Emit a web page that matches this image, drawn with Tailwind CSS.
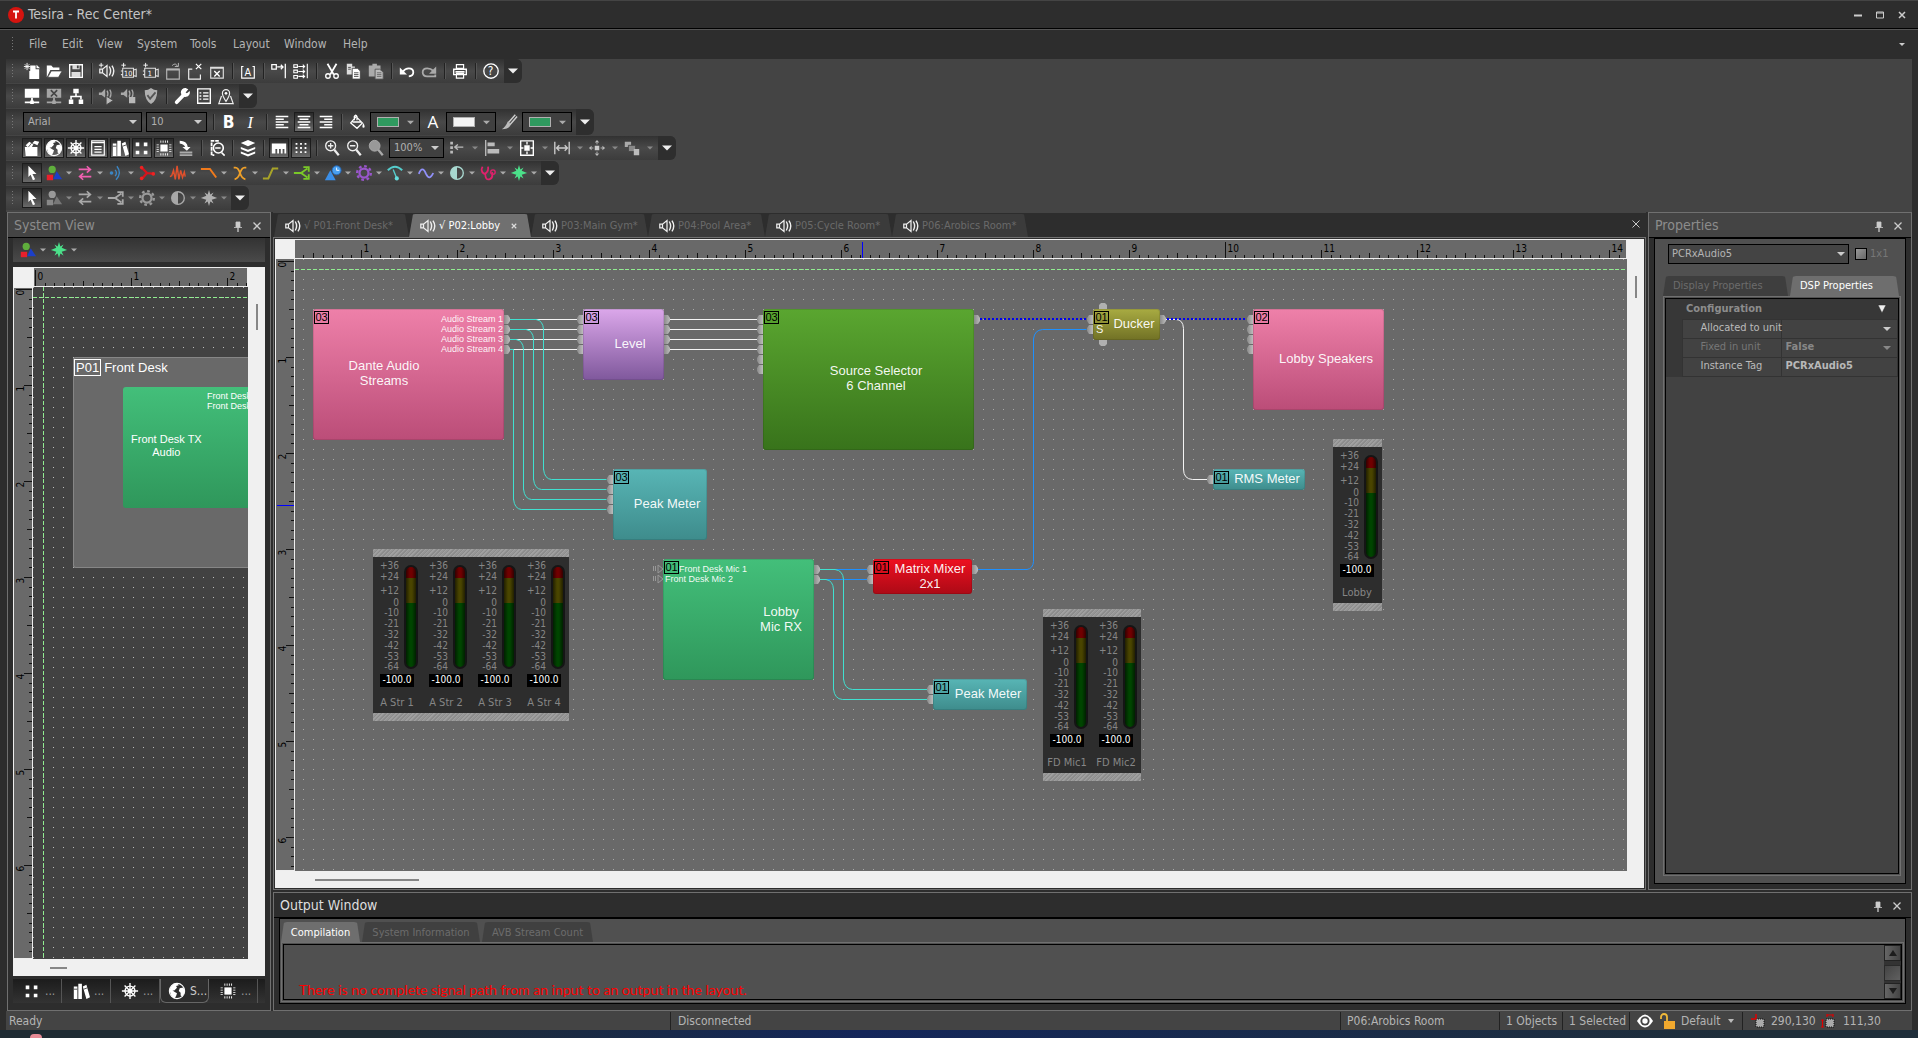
<!DOCTYPE html>
<html lang="en">
<head>
  <meta charset="UTF-8" />
  <meta name="viewport" content="width=device-width, initial-scale=1.0"/>
  <title>Tesira - Rec Center*</title>
  <script src="https://cdn.jsdelivr.net/npm/@tailwindcss/browser@4"></script>
</head>
<body class="h-screen flex flex-col overflow-hidden bg-[#2d2d2d] font-['DejaVu_Sans_Condensed','DejaVu_Sans',sans-serif] text-[12px] text-[#b4b4b4]">

  <!-- Title bar -->
  <header class="h-[29px] shrink-0 flex items-center pl-2 pr-2 border-t border-t-[#444] border-b border-b-black">
    <svg class="w-4 h-4 mr-1" viewBox="0 0 16 16"><circle cx="8" cy="8" r="8" fill="#d5140f"/><path d="M5 4.5h6M8 4.5v7" stroke="#fff" stroke-width="1.8" fill="none"/></svg>
    <h1 class="text-[14px] text-[#c4c4c4]">Tesira - Rec Center*</h1>
    <div class="ml-auto flex gap-[6px]">
      <button aria-label="Minimize" class="w-4 h-4"><svg viewBox="0 0 16 16"><path d="M4 8.500h8" stroke="#ccc" stroke-width="2"/></svg></button>
      <button aria-label="Maximize" class="w-4 h-4"><svg viewBox="0 0 16 16"><path d="M4.500 5h7v6h-7zM4.500 6h7" stroke="#ccc" fill="none"/></svg></button>
      <button aria-label="Close" class="w-4 h-4"><svg viewBox="0 0 16 16"><path d="M5 5l6 6M11 5l-6 6" stroke="#ccc" stroke-width="1.500"/></svg></button>
    </div>
  </header>

  <!-- Menu -->
  <nav class="h-[30px] shrink-0 flex items-center border-t border-[#555] pl-[11px] pr-2 pb-[2px]">
    <span class="w-[3px] h-4 mr-[8px] bg-[radial-gradient(#777_1px,transparent_1px)] bg-size-[3px_3px]"></span>
    <div id="menu" class="flex"></div>
    <svg class="ml-auto w-4 h-4" viewBox="0 0 16 16"><path d="M5 7h6l-3 3z" fill="#ccc"/></svg>
  </nav>

  <!-- Toolbars -->
  <div class="shrink-0 ml-[6px] mr-[6px] h-[153px] bg-[#444] flex flex-col items-start" id="toolbars"></div>

  <!-- Panels -->
  <main class="flex-1 min-h-0 flex gap-[2px] pl-[7px] pr-[6px]">

    <aside class="w-[264px] shrink-0 flex flex-col border border-[#707070] px-[5px] pb-[7px]">
      <div class="h-[25px] shrink-0 -mx-[5px] pl-[6px] pr-[5px] pt-px flex items-center bg-[#444] border-b border-black">
        <h2 class="text-[14px] text-[#8c8c8c]">System View</h2>
        <div class="ml-auto flex gap-[3px]" data-panel-buttons></div>
      </div>
      <div id="systemTools" class="h-6 shrink-0 flex items-center pl-1 bg-linear-to-b from-[#333] to-[#4a4a4a]"></div>
      <div class="mt-[5px] flex-1 min-h-0 grid grid-cols-[20px_1fr_17px] grid-rows-[20px_1fr_17px] bg-[#f0f0f0]">
        <span></span>
        <div class="relative overflow-hidden bg-[#696969] border border-[#eee]" data-ruler="h" data-start="1"></div>
        <span></span>
        <div class="relative overflow-hidden bg-[#696969] border border-[#eee]" data-ruler="v" data-start="1"></div>
        <div class="relative overflow-hidden bg-[#424242] bg-[radial-gradient(circle_at_0_0,#bdbdbd_1px,transparent_1px)] bg-size-[10px_10px]" id="systemCanvas"></div>
        <span class="relative"><i class="absolute left-2 top-[17px] w-[2px] h-[26px] bg-[#868686]"></i></span>
        <span></span>
        <span class="relative"><i class="absolute left-[17px] top-2 w-[17px] h-[2px] bg-[#868686]"></i></span>
        <span></span>
      </div>
      <div id="dockTabs" class="mt-[3px] h-6 shrink-0 flex bg-linear-to-b from-[#1c1c1c] to-[#333]"></div>
    </aside>

    <div class="flex-1 min-w-0 flex flex-col gap-[2px]">
      <div class="flex-1 min-h-0 flex gap-[2px]">

        <!-- Partition layout -->
        <section class="flex-1 min-w-0 flex flex-col">
          <div class="h-[25px] shrink-0 flex items-end pl-px border-t border-[#444]">
            <div id="docTabs" class="flex"></div>
            <button aria-label="Close tab" class="ml-auto mr-[2px] mb-[5px] w-4 h-4"><svg viewBox="0 0 16 16"><path d="M4.500 4.500l7 7M11.500 4.500l-7 7" stroke="#c8c8c8"/></svg></button>
          </div>
          <div class="flex-1 min-h-0 border border-[#707070] pt-px pl-px pb-px grid grid-cols-[20px_1fr_18px] grid-rows-[20px_1fr_17px]">
            <span class="bg-[#f0f0f0]"></span>
            <div class="relative overflow-hidden bg-[#696969] border border-l-0 border-[#eee]" data-ruler="h" data-start="-30" data-mark="567"></div>
            <span class="bg-[#f0f0f0] row-span-3 mr-px"><i class="block ml-2 mt-[37px] w-[2px] h-[22px] bg-[#868686]"></i></span>
            <div class="relative overflow-hidden bg-[#696969] border border-t-0 border-[#eee]" data-ruler="v" data-start="2" data-mark="246"></div>
            <div class="relative overflow-hidden bg-[#696969] bg-[radial-gradient(circle_at_0_0,#a8a8a8_1px,transparent_1px)] bg-position-[8px_0px] bg-size-[10px_10px]" id="canvas"></div>
            <span class="bg-[#f0f0f0] col-span-2"><i class="block ml-10 mt-2 w-[104px] h-[2px] bg-[#868686]"></i></span>
          </div>
        </section>

        <!-- Properties -->
        <aside class="w-[264px] shrink-0 flex flex-col border border-[#707070] px-[5px] pb-[5px]">
          <div class="h-[25px] shrink-0 -mx-[5px] pl-[6px] pr-[5px] pt-px flex items-center bg-[#444] border-b border-black">
            <h2 class="text-[14px] text-[#8c8c8c]">Properties</h2>
            <div class="ml-auto flex gap-[3px]" data-panel-buttons></div>
          </div>
          <div class="flex-1 min-h-0 flex flex-col border border-black bg-[#505050] pt-[5px] px-[8px] pr-[4px] pb-[7px]">
            <div class="flex items-center pl-[5px]">
              <label class="relative w-[181px]" title="Object">
                <select aria-label="Object" class="appearance-none w-full h-5 pl-[3px] leading-[14px] border border-black bg-[#444] text-[#b4b4b4] text-[11px]"><option>PCRxAudio5</option></select>
                <svg class="absolute right-1 top-[6px] w-2 h-2" viewBox="0 0 8 8"><path d="M0 2h8l-4 4z" fill="#ccc"/></svg>
              </label>
              <label class="flex items-center ml-[6px] text-[11px] text-[#777]"><input type="checkbox" class="appearance-none w-3 h-3 mr-[3px] border border-black bg-linear-to-br from-[#999] to-[#666]">1x1</label>
            </div>
            <div class="flex mt-3 gap-[2px] text-[11px]">
              <button class="h-5 w-[125px] text-left pl-[10px] pt-px rounded-t-md bg-[#3e3e3e] text-[#6c6c6c] [clip-path:polygon(3px_0,122px_0,100%_100%,0_100%)]">Display Properties</button>
              <button class="h-5 w-[109px] text-left pl-[10px] pt-px rounded-t-md bg-[#6e6e6e] text-white [clip-path:polygon(3px_0,106px_0,100%_100%,0_100%)]">DSP Properties</button>
            </div>
            <div class="flex-1 border border-[#707070] bg-[#505050] p-px">
              <div class="h-full border border-black bg-[#424242]">
                <table class="w-full table-fixed text-[11px] bg-[#373737] border-collapse">
                  <colgroup><col class="w-[16px]"><col class="w-[99px]"><col></colgroup>
                  <tr class="h-5"><td></td><th colspan="2" class="text-left pl-1 text-[#8c8c8c] pr-[11px]"><div class="flex justify-between items-center">Configuration<svg class="w-[10px] h-[10px]" viewBox="0 0 10 10"><path d="M1 1h8l-4 8z" fill="#eee" stroke="#222" stroke-width=".5"/></svg></div></th></tr>
                  <tr class="h-[19px]"><td></td><td class="bg-[#424242] border border-[#333] pl-[18px] whitespace-nowrap text-[#bbb]">Allocated to unit</td><td class="bg-[#424242] border border-[#333]"><svg class="ml-auto mr-[6px] w-2 h-2" viewBox="0 0 8 8"><path d="M0 2h8l-4 4z" fill="#ccc"/></svg></td></tr>
                  <tr class="h-[19px]"><td></td><td class="bg-[#424242] border border-[#333] pl-[18px] text-[#777]">Fixed in unit</td><td class="bg-[#424242] border border-[#333] pl-1 text-[#888] font-bold"><div class="flex items-center justify-between">False<svg class="mr-[6px] w-2 h-2" viewBox="0 0 8 8"><path d="M0 2h8l-4 4z" fill="#888"/></svg></div></td></tr>
                  <tr class="h-[19px]"><td></td><td class="bg-[#424242] border border-[#333] pl-[18px] text-[#bbb]">Instance Tag</td><td class="bg-[#424242] border border-[#333] pl-1 font-bold text-[#b8b8b8]">PCRxAudio5</td></tr>
                </table>
              </div>
            </div>
          </div>
        </aside>
      </div>

      <!-- Output -->
      <section class="h-[119px] shrink-0 flex flex-col border border-[#707070] px-[5px] pb-[6px]">
        <div class="h-[25px] shrink-0 -mx-[5px] px-[6px] pt-px flex items-center border-b border-black">
          <h2 class="text-[14px] text-[#dedede]">Output Window</h2>
          <div class="ml-auto flex gap-[3px]" data-panel-buttons></div>
        </div>
        <div class="flex-1 flex flex-col border border-black bg-[#505050] pt-[3px] px-px pb-px">
          <div class="flex gap-[2px] text-[11px]">
            <button class="h-5 w-[79px] rounded-t-md pt-[2px] bg-[#6e6e6e] text-white [clip-path:polygon(3px_0,76px_0,100%_100%,0_100%)]">Compilation</button>
            <button class="h-5 w-[118px] rounded-t-md pt-[2px] bg-[#404040] text-[#6c6c6c] [clip-path:polygon(3px_0,115px_0,100%_100%,0_100%)]">System Information</button>
            <button class="h-5 w-[111px] rounded-t-md pt-[2px] bg-[#404040] text-[#6c6c6c] [clip-path:polygon(3px_0,108px_0,100%_100%,0_100%)]">AVB Stream Count</button>
          </div>
          <div class="flex-1 flex border border-[#707070] p-px">
            <div class="flex-1 flex border border-black">
              <p class="flex-1 self-end pl-[15px] pb-px leading-[17px] font-[Lato,sans-serif] text-[14px] text-[#f00]">There is no complete signal path from an input to an output in the layout.</p>
              <div class="w-[17px] flex flex-col gap-[2px] bg-[#333]">
                <button aria-label="Scroll up" class="h-4 border border-[#222] bg-linear-to-r from-[#666] to-[#444]"><svg class="m-auto w-2 h-2" viewBox="0 0 8 8"><path d="M4 1l4 6h-8z" fill="#1c1c1c"/></svg></button>
                <span class="flex-1 mt-[2px] border border-[#2a2a2a] bg-linear-to-br from-[#444] to-[#606060]"></span>
                <button aria-label="Scroll down" class="h-4 border border-[#222] bg-linear-to-r from-[#666] to-[#444]"><svg class="m-auto w-2 h-2" viewBox="0 0 8 8"><path d="M4 7l4-6h-8z" fill="#1c1c1c"/></svg></button>
              </div>
            </div>
          </div>
        </div>
      </section>
    </div>
  </main>

  <!-- Status bar -->
  <footer class="h-[19px] shrink-0 flex items-center ml-[6px] mr-[6px] bg-[#444]">
    <span class="w-[664px] pl-[3px]">Ready</span>
    <span class="flex-1 pl-[7px] border-l border-[#222]">Disconnected</span>
    <span class="w-[159px] pl-[6px] border-l border-[#222]">P06:Arobics Room</span>
    <span class="w-[63px] pl-[6px] border-l border-[#222]">1 Objects</span>
    <span class="w-[67px] pl-[6px] border-l border-[#222]">1 Selected</span>
    <span class="w-[113px] flex items-center pl-[7px] border-l border-[#222]">
      <svg class="w-4 h-4 mr-[6px] shrink-0" viewBox="0 0 16 16"><path d="M0 8q8-13 16 0q-8 13-16 0z" fill="#fff"/><circle cx="8" cy="8" r="4.600" fill="#444"/><circle cx="8" cy="8" r="2.700" fill="#fff"/></svg>
      <svg class="w-4 h-4 mr-[6px] shrink-0" viewBox="0 0 16 16"><path d="M2 6V4a3 3 0 0 1 6 0v4" fill="none" stroke="#f0b93a" stroke-width="1.800"/><path d="M5 8h11v8H5z" fill="#f2a92e"/></svg>
      Default
      <svg class="ml-2 w-[6px] h-[6px] shrink-0" viewBox="0 0 6 6"><path d="M0 1h6l-3 4z" fill="#bbb"/></svg>
    </span>
    <span class="w-[79px] flex items-center pl-2 border-l border-[#222]">
      <svg class="w-[14px] h-[14px] mr-[6px] shrink-0" viewBox="0 0 14 14"><path d="M5 5h8v8H5z" fill="#aaa" stroke="#111" stroke-dasharray="1 1"/><path d="M0 5h5M5 0v5" stroke="#d00" stroke-width="1.500"/></svg>290,130</span>
    <span class="w-[91px] flex items-center">
      <svg class="w-[14px] h-[14px] mr-[8px] shrink-0" viewBox="0 0 14 14"><path d="M5 5h8v8H5z" fill="#aaa" stroke="#111" stroke-dasharray="1 1"/><path d="M6 1h6M6 0v3M12 0v3M1.500 6v7M0 6h3M0 13h3" stroke="#d00" stroke-width="1.200"/></svg>111,30</span>
  </footer>
  <div class="h-2 shrink-0 bg-linear-to-r from-[#1f2b33] from-20% via-[#14265a] via-45% to-[#1f2e3a] to-90% flex items-end pl-[30px]">
    <i class="w-3 h-1 rounded-t-full bg-[#e58a95]"></i>
  </div>

  <script>
    const G = '#a8a8a8';
    // shapes that come in several colours
    const shapes = (a, b, c) => `<circle cx="8" cy="6" r="4" fill="${a}"/><path d="M2 12h7v6H2z" fill="${b}"/><path d="M13 8l6 9H9z" fill="${c}"/>`;
    const swap = c => `<path d="M3 6h12M12 2.500l4 3.500-4 3.500M17 14H5M8 10.500L4 14l4 3.500" fill="none" stroke="${c}" stroke-width="1.800"/>`;
    const split = c => `<path d="M1 10h8M9 10l7-5M9 10l7 5M11.500 3.500h6v5M17.500 11.500v5h-6" fill="none" stroke="${c}" stroke-width="2"/>`;
    const gear = c => `<circle cx="10" cy="10" r="5" fill="none" stroke="${c}" stroke-width="2.500"/><circle cx="10" cy="10" r="7.600" fill="none" stroke="${c}" stroke-width="2.600" stroke-dasharray="2.980 2.980"/>`;
    const half = c => `<circle cx="10" cy="10" r="7" fill="none" stroke="${c}" stroke-width="1.500"/><path d="M10 3a7 7 0 0 0 0 14z" fill="${c}"/>`;
    const star = c => `<path d="M10 1l1.500 5 3.500-2-2 3.500 6 2.500-6 2 2 4-3.500-2-1.500 5-1.500-5L5 16l2-4-6-2 6-2.500L5 4l3.500 2z" fill="${c}"/>`;
    const wheel = `<g fill="none" stroke="#fff" stroke-width="1.500"><circle cx="10" cy="10" r="5.500"/><path d="M10 1v18M1 10h18M4 4l12 12M16 4L4 16"/></g><circle cx="10" cy="10" r="2.500" fill="#fff"/>`;
    const globe = `<circle cx="10" cy="10" r="8.500" fill="none" stroke="#fff" stroke-width="1.200"/><path d="M2 8q2-6 8-6.500l2 2-3 1 1 2-3 3-2 0 3 2 2 1-1 3-2 3q-5-3-5-10.500zM13 7l4-1q2 3 1.500 6l-2.500 4-2-1v-3l-2-2z" fill="#fff"/>`;
    const books = `<path d="M2 5h4v14H2zM7 2h4v17H7zM12 5l4-2 4 14-4 2z" fill="#fff"/><path d="M2 8h4M13 8l4-1.500" stroke="#444"/>`;
    const chip = `<path d="M6 6h8v8H6z" fill="#fff"/><path d="M6 3h8.500M6 17h8.500M3 6v8.500M17 6v8.500" stroke="#fff" stroke-width="2.500" stroke-dasharray="1 1.500" fill="none"/>`;
    const four = `<path d="M3 4h4v4H3zM12 4h4v4h-4zM3 13h4v4H3zM12 13h4v4h-4z" fill="#fff"/>`;
    const lens = (c, t) => `<circle cx="8.500" cy="7.500" r="5.500" fill="none" stroke="${c}" stroke-width="1.500"/><path d="M12.500 12l5 6" stroke="${c}" stroke-width="2.500"/><path d="${t}" stroke="${c}" stroke-width="1.500"/>`;
    const lines = (...l) => l.map(([x, w], i) => `<path d="M${x} ${4 + i * 3}h${w}" stroke="#fff" stroke-width="1.700"/>`).join('');
    const speaker = `<path d="M2 8h3l5-4v12l-5-4H2zM5 8v4" fill="none" stroke="#eee" stroke-width="1.400"/><path d="M12.500 5q3 5 0 10M15.500 4q4 6 0 12" fill="none" stroke="#eee" stroke-width="1.600"/>`;

    const icons = {
      new: `<path d="M8 4h6v4h4v11H7v-9h1z" fill="#fff"/><path d="M15 3l4 4h-4z" fill="#fff"/><path d="M4.500 1v8M1 5h7M2 2.500l5 5M7 2.500l-5 5" stroke="#fff"/>`,
      open: `<path d="M2 17V4h5l2 2h7v3H6z" fill="#fff"/><path d="M7 10h12l-4 7H3z" fill="#fff" stroke="#444" stroke-width=".8"/>`,
      save: `<path d="M3 3h14v14H3z" fill="none" stroke="#fff" stroke-width="1.500"/><path d="M5 11h10v6H5zM6 3h8v5H6z" fill="#ddd"/><path d="M11 4h2v3h-2z" fill="#444"/>`,
      speaker: speaker + `<path d="M3.500 1v5M1 3.500h5" stroke="#fff"/>`,
      ten: `<path d="M3 7h12v10H3zM1 10h2M1 14h2M15 9l3-1v8l-3-1" fill="none" stroke="#ddd" stroke-width="1.200"/><text x="4.500" y="15" font-size="8" fill="#fff">10</text><path d="M4 1v5M1.500 3.500h5" stroke="#fff"/>`,
      one: `<path d="M3 7h12v10H3zM1 10h2M1 14h2M15 9l3-1v8l-3-1" fill="none" stroke="#ddd" stroke-width="1.200"/><text x="6.500" y="15" font-size="8" fill="#fff">1</text><path d="M4 1v5M1.500 3.500h5" stroke="#fff"/>`,
      window: `<path d="M3 8h14v11H3z" fill="none" stroke="#b5b5b5" stroke-width="1.300"/><path d="M3 8.500h14" stroke="#b5b5b5" stroke-width="2"/><path d="M9 4q4-4 6 1M16 1v4h-4" fill="none" stroke="#bbb"/>`,
      closePart: `<path d="M6 8H3v11h13v-5M3 8h4" fill="none" stroke="#eee" stroke-width="1.300"/><path d="M11 2l6 6M17 2l-6 6" stroke="#fff" stroke-width="1.300"/>`,
      deletePart: `<path d="M3 6h14v12H3z" fill="none" stroke="#ddd" stroke-width="1.300"/><path d="M3 6.500h14" stroke="#ddd" stroke-width="2"/><path d="M7 10l6 6M13 10l-6 6" stroke="#fff" stroke-width="1.500"/>`,
      text: `<path d="M5 5H3v13h14V5h-2" fill="none" stroke="#fff" stroke-width="1.300"/><text x="6" y="15" font-size="12" fill="#fff">A</text>`,
      toLine: `<path d="M2 3h5v5H2zM17 2v16M8 5.500h6M12 3l2.500 2.500L12 8" fill="none" stroke="#fff" stroke-width="1.400"/>`,
      toLines: `<path d="M2 3h4v3H2zM2 9h4v3H2zM2 15h4v3H2zM17 2v16M7 5h7M7 10.500h7M7 16h7M12 3l2 2-2 2M12 8.500l2 2-2 2M12 14l2 2-2 2" fill="none" stroke="#fff" stroke-width="1.200"/>`,
      cut: `<path d="M5 2l7 12M15 2L8 14" stroke="#fff" stroke-width="2"/><circle cx="5.500" cy="15.500" r="2.500" fill="none" stroke="#fff" stroke-width="1.500"/><circle cx="14.500" cy="15.500" r="2.500" fill="none" stroke="#fff" stroke-width="1.500"/>`,
      copy: `<path d="M2 2h6v3h3v9H2z" fill="#ddd"/><path d="M8 7h6l3 3v9H8z" fill="#fff" stroke="#444"/><path d="M10 12h5M10 14h5M10 16h5M3.500 6h3M3.500 8h3" stroke="#444"/>`,
      paste: `<path d="M2 4h4V2h5v2h4v12H2z" fill="#aaa"/><path d="M9 8h5l4 3v8H9z" fill="#bbb" stroke="#555"/><path d="M11 12h5M11 14h5M11 16h5" stroke="#666"/>`,
      undo: `<path d="M2 6v8h8z" fill="#fff"/><path d="M5 11q3-4 7-4 5 0 5 4.500 0 4-5 4.500" fill="none" stroke="#fff" stroke-width="2"/>`,
      redo: `<path d="M18 5v8h-8z" fill="#aaa"/><path d="M15 10q-3-3-7-3-5 0-5 4.500T8 16h9v-2" fill="none" stroke="#aaa" stroke-width="2"/>`,
      print: `<path d="M6 3h8v4H6zM6 13h8v5H6z" fill="none" stroke="#fff" stroke-width="1.300"/><path d="M3 8h14v6H3z" fill="none" stroke="#fff" stroke-width="1.500"/><path d="M5 10h10v2H5z" fill="#fff"/>`,
      help: `<circle cx="10" cy="10" r="8" fill="none" stroke="#fff" stroke-width="1.500"/><text x="6.500" y="14.500" font-size="13" fill="#fff">?</text>`,
      connect: `<path d="M2 2h16v10H2z" fill="#fff"/><path d="M10 12v5M2 17h16" stroke="#fff" stroke-width="2"/><path d="M8 15h4v4H8z" fill="#fff"/>`,
      disconnect: `<path d="M2 2h16v10H2z" fill="#a5a5a5"/><path d="M10 12v5M2 17h16" stroke="#a5a5a5" stroke-width="2"/><path d="M8 15h4v4H8z" fill="#a5a5a5"/><path d="M6.500 3.500l7 7M13.500 3.500l-7 7" stroke="#444" stroke-width="1.800"/>`,
      network: `<path d="M7 2h6v5H7zM2 14h5v5H2zM13 14h5v5h-5z" fill="#fff"/><path d="M10 7v4M4.500 14v-3.500h11V14" fill="none" stroke="#fff" stroke-width="1.800"/>`,
      start: `<path d="M1 6h3l4-4v10L4 9H1z" fill="#a8a8a8"/><path d="M10 4q2 3 0 7M13 3q3 4 0 9" fill="none" stroke="#a8a8a8" stroke-width="1.500"/><path d="M9 10l8 5-8 5z" fill="#b8b8b8" stroke="#444"/>`,
      stop: `<path d="M1 6h3l4-4v10L4 9H1z" fill="#a8a8a8"/><path d="M10 4q2 3 0 7M13 3q3 4 0 9" fill="none" stroke="#a8a8a8" stroke-width="1.500"/><path d="M10 11h7v7h-7z" fill="#b8b8b8"/>`,
      shield: `<path d="M10 1q3 2.500 7 2.500q0 11-7 15.500q-7-4.500-7-15.500q4 0 7-2.500z" fill="#b0b0b0"/><path d="M6 9l3 4 6-7" fill="none" stroke="#555" stroke-width="2"/>`,
      wrench: `<path d="M4 17L12 8.500" stroke="#fff" stroke-width="4" stroke-linecap="round"/><path d="M17 2.500l-3 3.500 1.500 1 3-2.500a5 5 0 1 1-4.500-3.500z" fill="#fff"/>`,
      list: `<path d="M3 2h14v16H3z" fill="none" stroke="#fff" stroke-width="1.500"/><path d="M5 6.500h2M5 10h2M5 13.500h2M9 6.500h6M9 10h6M9 13.500h6" stroke="#fff" stroke-width="1.500"/>`,
      map: `<path d="M5 10l-3 8.500h16L15 10" fill="none" stroke="#eee" stroke-width="1.300"/><path d="M10 16q-4-6-4-9a4 4 0 0 1 8 0q0 3-4 9z" fill="none" stroke="#eee" stroke-width="1.300"/><circle cx="10" cy="7" r="1.500" fill="#fff"/>`,
      bold: `<text x="3" y="17" font-size="19" font-weight="bold" fill="#fff">B</text>`,
      italic: `<text x="6" y="17" font-size="18" font-style="italic" font-family="Liberation Serif" fill="#fff">I</text>`,
      left: lines([3, 14], [3, 9], [3, 14], [3, 9], [3, 14]),
      center: lines([3, 14], [5, 10], [3, 14], [5, 10], [3, 14]),
      right: lines([3, 14], [8, 9], [3, 14], [8, 9], [3, 14]),
      fill: `<path d="M9 4l7 7-6 6-7-6zM5 10h10M7 8V4q1.500-3 3 0v4" fill="none" stroke="#fff" stroke-width="1.400"/><path d="M17 11q3 5 0 5.500q-2-.5 0-5.500z" fill="#fff"/>`,
      color: `<text x="4" y="17" font-size="19" font-family="Open Sans" fill="#fff">A</text>`,
      brush: `<path d="M17 2L9 11M19 4l-8 9" stroke="#ccc" stroke-width="1.600"/><path d="M9 9l3 4q-2 5-10 5 4-2 7-9z" fill="#bbb"/>`,
      tools: `<path d="M2 9h14v10H3zM3 7l4-4 3 2 3-3 5 1-2 4-4-2-2 4H5z" fill="#fff"/><path d="M6 9l4-5 3 4" stroke="#555" fill="none"/>`,
      globe, wheel, books, chip, four,
      form: `<path d="M3 2h14v16H3z" fill="none" stroke="#fff" stroke-width="1.300"/><path d="M3 4h14M6 8.500h8M6 11.500h8M6 14.500h8" stroke="#fff" stroke-width="1.300"/>`,
      dock: `<path d="M3 2q8 0 9 7h3l-4 4-5-4h3q-1-3-6-4z" fill="#fff"/><path d="M3 14h14v2H3zM3 17h14v2H3z" fill="#aaa"/>`,
      find: `<path d="M12 2H4v16h3" fill="none" stroke="#fff" stroke-width="2" stroke-dasharray="4 1"/><circle cx="11.500" cy="10" r="5.500" fill="none" stroke="#fff" stroke-width="1.800"/><path d="M8 10h6M15 15l3.500 3.500" stroke="#fff" stroke-width="1.800"/>`,
      layers: `<path d="M10 1l8 3.500-8 3.500-8-3.500zM2 9l8 3 8-3v2l-8 3.500L2 11zM2 14l8 3 8-3v2l-8 3.500L2 16z" fill="#fff"/>`,
      ruler: `<path d="M2 5h16v11h-2v-5h-2v5h-2v-5h-2v5H8v-5H6v5H2z" fill="#fff"/>`,
      grid: `<path d="M4 5.500h12M4 10h12M4 14.500h12" stroke="#fff" stroke-width="2" stroke-dasharray="2 3"/>`,
      zoomIn: lens('#eee', 'M5.500 7.500h6M8.500 4.500v6'),
      zoomOut: lens('#eee', 'M5.500 7.500h6'),
      zoomArea: `<circle cx="8.500" cy="7.500" r="6" fill="#999" stroke="#aaa"/><path d="M12.500 12l5 6" stroke="#aaa" stroke-width="2.500"/>`,
      alignTo: `<path d="M4 3v14" stroke="#bbb" stroke-width="3" stroke-dasharray="3 2"/><path d="M8 9h9M11 6L7.500 9l3.500 3" fill="none" stroke="#bbb" stroke-width="1.500"/>`,
      alignLeft: `<path d="M3 1v18" stroke="#bbb" stroke-width="1.500"/><path d="M5 4h8v4H5zM5 11h13v5H5z" fill="#bbb"/>`,
      centre: `<path d="M3 2h14v16H3z" fill="none" stroke="#fff" stroke-width="1.500"/><path d="M7 7h6v6H7z" fill="#fff"/><path d="M10 3v14M3 10h14" stroke="#fff" stroke-width="1.500" stroke-dasharray="3 8"/>`,
      width: `<path d="M2 3v14M18 3v14M4 10h12M7 7l-3 3 3 3M13 7l3 3-3 3" fill="none" stroke="#ccc" stroke-width="1.500"/>`,
      nudge: `<path d="M7.500 7.500h5v5h-5z" fill="#ccc"/><path d="M10 1l2.500 3h-5zM10 19l2.500-3h-5zM1 10l3-2.500v5zM19 10l-3-2.500v5z" fill="#bbb"/><path d="M4 10h12M10 4v12" stroke="#bbb" stroke-dasharray="2 8"/>`,
      order: `<path d="M2 3h7v6H2z" fill="#aaa"/><path d="M6 7h8v7H6z" fill="#888" stroke="#444"/><path d="M12 11h6v7h-6z" fill="#bbb"/>`,
      cursor: `<path d="M6 2l9 9H10.500l3 6-2.500 1-2.500-6L6 14.500z" fill="#fff"/>`,
      shapes: shapes('#5fae3c', '#e8202c', '#1c3fc8'), shapesOff: shapes('#999', '#888', '#777'),
      swap: swap('#ee5fb0'), swapOff: swap(G),
      waves: `<circle cx="5" cy="10" r="2" fill="#3b86c4"/><path d="M9 6.500q3 3.500 0 7M11 2.500q6 7.500-1 15" fill="none" stroke="#3b86c4" stroke-width="1.500"/>`,
      junction: `<path d="M4 4l6 6 8 1M10 10l-6 7" fill="none" stroke="#d8131c" stroke-width="2.500"/><circle cx="4" cy="4" r="2" fill="#e22"/><circle cx="4" cy="16" r="2" fill="#e22"/><circle cx="17" cy="11" r="2" fill="#e22"/>`,
      signal: `<path d="M1 14l2-1 2-6 2 10 2-15 2 15 2-10 2 8 2-6 1 5" fill="none" stroke="#e0502c" stroke-width="1.600"/>`,
      lowpass: `<path d="M1 5.500h10l7 9.500" fill="none" stroke="#f07a1c" stroke-width="2.200"/>`,
      cross: `<path d="M3 4h2q3 0 5 6t6 7M17 4h-2q-3 0-5 6t-6 7" fill="none" stroke="#f0a028" stroke-width="2"/>`,
      slope: `<path d="M1 16h6l5-11h6" fill="none" stroke="#a8a428" stroke-width="2.200"/>`,
      split: split('#7ac828'), splitOff: split(G),
      delay: `<path d="M7 7l6 11H1z" fill="#3b8fe8"/><circle cx="14" cy="7" r="5" fill="#4aa0f0" stroke="#2563b0"/><path d="M14 4v3h3" fill="none" stroke="#fff"/>`,
      gear: gear('#9a56cc'), gearOff: gear('#999'),
      meter: `<path d="M2 7q8-8 16 0" fill="none" stroke="#5cc" stroke-width="2.200"/><path d="M8 6l4 10" stroke="#5cc" stroke-width="1.500"/><circle cx="12" cy="16" r="2.300" fill="#6dd"/>`,
      sine: `<path d="M2 11q4-10 8 0q4 8 8-1" fill="none" stroke="#9090f8" stroke-width="2"/>`,
      half: half('#a8d8d0'), halfOff: half(G),
      stetho: `<path d="M4 3q-3 5 2 8q5-2 4-8M7 11q0 7 4.500 6t3-8" fill="none" stroke="#e0206c" stroke-width="1.900"/><circle cx="15.500" cy="9" r="2.500" fill="none" stroke="#e0206c" stroke-width="1.500"/>`,
      star: star('#4be08a'), starOff: star('#b0b0b0'),
    };
    const svg = (name, size = 'w-5 h-5') => `<svg class="${size}" viewBox="0 0 20 20">${icons[name]}</svg>`;
    const caret = (c, cls) => `<svg class="${cls}" viewBox="0 0 8 8"><path d="M0 2h8l-4 4z" fill="${c}"/></svg>`;

    // '|' separator, '+x' pressed, 'x>' with narrow arrow, 'x>>' with wide arrow, '[..]' combo
    const rows = [
      'new open save | speaker ten one window closePart deletePart | text | toLine toLines | cut copy paste | undo redo | print | help',
      'connect disconnect network | start stop shield | wrench list map',
      '[Arial] [10] | bold italic | left +center right | fill [#2f9a5f] color [#f4f4f4] brush [#2f9a5f]',
      '+tools +globe +wheel +form +books +four +chip dock | find | layers | +ruler +grid | zoomIn zoomOut zoomArea [100%] alignTo>> alignLeft>> centre>> width>> nudge>> order>>',
      '+cursor shapes> swap> waves> junction> signal> lowpass> cross> slope> split> delay> gear> meter> sine> half> stetho> star>',
      '+cursor shapesOff> swapOff> splitOff> gearOff> halfOff> starOff>',
    ];

    function toolItem(t) {
      if (t === '|') return '<span class="w-[9px] flex justify-center"><i class="w-[2px] h-4 border-l border-[#222] bg-[#555]"></i></span>';
      if (t[0] === '[') {
        const v = t.slice(1, -1);
        if (v[0] === '#') return `<button aria-label="Pick colour" class="w-[50px] h-5 mx-[2px] flex items-center justify-between pl-[6px] pr-[5px] border border-black bg-[#404040]"><i class="w-[22px] h-[10px] border border-[#b0b0b0]" style="background:${v}"></i>${caret('#aaa', 'w-[7px] h-[7px]')}</button>`;
        const w = v === 'Arial' ? 'w-[119px] ml-[2px] mr-[4px]' : v === '10' ? 'w-[61px] mr-[2px]' : 'w-[55px] ml-[2px] mr-[2px]';
        return `<label class="relative block ${w} h-5"><select aria-label="${v}" class="appearance-none w-full h-5 pl-1 border border-black bg-[#404040] text-[11px] leading-[14px] text-[#b0b0b0]"><option>${v}</option></select>${caret('#ccc', 'absolute right-[5px] top-[6px] w-2 h-2')}</label>`;
      }
      const on = t[0] === '+';
      const wide = t.endsWith('>>'), drop = t.endsWith('>');
      const name = t.replace(/[+>]/g, '');
      const off = name.endsWith('Off');
      const btn = `<button aria-label="${name}" class="w-[22px] h-5 flex items-center justify-center ${on ? 'px-px' : ''}">${on ? `<span class="w-5 h-5 flex items-center justify-center border border-[#1c1c1c] bg-linear-to-b from-[#2a2a2a] to-[#6a6a6a]">${svg(name, 'w-[18px] h-[18px]')}</span>` : svg(name, 'w-[18px] h-[18px]')}</button>`;
      if (!drop) return btn;
      return `<span class="flex items-center ${wide ? 'w-[35px] gap-[4px]' : 'w-[31px] gap-px'}">${btn}${caret(off || wide ? '#888' : '#aaa', 'w-[6px] h-[6px]')}</span>`;
    }

    document.getElementById('toolbars').innerHTML = rows.map((r, i) => `
      <div class="flex ${i === 2 ? 'h-[27px]' : 'h-[25px]'} pb-px">
        <div class="h-full flex items-center pl-[5px] rounded-r-md overflow-hidden bg-linear-to-b from-[#323232] via-[#494949] via-50% to-[#3c3c3c]">
          <span class="w-[3px] h-4 mr-[7px] bg-[radial-gradient(#777_1px,transparent_1px)] bg-size-[3px_3px]"></span>
          ${r.split(' ').map(toolItem).join('')}
          <button aria-label="More" class="ml-[2px] w-[18px] h-full bg-[#2e2e2e] flex items-center justify-center">${caret('#eee', 'w-[10px] h-[10px]')}</button>
        </div>
      </div>`).join('');

    document.getElementById('systemTools').innerHTML = ['shapes>', 'star>'].map(toolItem).join('');

    document.getElementById('menu').innerHTML = [['File', 'w-[33px]'], ['Edit', 'w-[35px]'], ['View', 'w-[40px]'], ['System', 'w-[53px]'], ['Tools', 'w-[43px]'], ['Layout', 'w-[51px]'], ['Window', 'w-[59px]'], ['Help', 'w-[40px]']]
      .map(([m, w]) => `<button class="${w} pl-[7px] text-left box-content mr-[-7px]">${m}</button>`).join('');

    document.querySelectorAll('[data-panel-buttons]').forEach(el => {
      el.innerHTML = `<button aria-label="Pin" class="w-4 h-4"><svg viewBox="0 0 16 16"><path d="M6 4h4v5H6zM4 9.500h8" fill="#ccc" stroke="#ccc" stroke-width=".8"/><path d="M8 9v5" stroke="#ccc" stroke-width="1.300"/></svg></button>
        <button aria-label="Close" class="w-4 h-4"><svg viewBox="0 0 16 16"><path d="M4.500 4.500l7 7M11.500 4.500l-7 7" stroke="#ccc" stroke-width="1.300"/></svg></button>`;
    });

    // Document tabs
    const tabs = [['√ P01:Front Desk*', 135], ['√ P02:Lobby', 122], ['P03:Main Gym*', 117], ['P04:Pool Area*', 117], ['P05:Cycle Room*', 127], ['P06:Arobics Room*', 136]];
    document.getElementById('docTabs').innerHTML = tabs.map(([name, w], i) => `
      <button class="h-[23px] flex items-center pl-[10px] pt-px rounded-t-md text-[11px] whitespace-nowrap [clip-path:polygon(4px_0,calc(100%_-_4px)_0,100%_100%,0_100%)] ${i === 1 ? 'bg-[#707070] text-white' : 'bg-[#3b3b3b] text-[#6a6a6a]'}" style="width:${w}px">
        <svg class="w-[18px] h-[18px] mr-[2px]" viewBox="0 0 20 20">${speaker}</svg>${name}
        ${i === 1 ? '<svg class="ml-auto mr-[14px] w-[6px] h-[6px]" viewBox="0 0 8 8"><path d="M1 1l6 6M7 1l-6 6" stroke="#ddd" stroke-width="1.500"/></svg>' : ''}
      </button>`).join('');

    document.getElementById('dockTabs').innerHTML = ['four', 'books', 'wheel', 'globe', 'chip'].map(n => `
      <button class="w-[49px] h-full flex items-center gap-1 ${n === 'globe' ? 'pl-[7px] bg-[#2d2d2d] border border-t-0 border-[#666] rounded-b-md text-[#ccc]' : 'pl-[10px] border-r border-[#555] text-[#999]'}">${svg(n, 'w-[18px] h-[18px]')}${n === 'globe' ? 'S...' : '...'}</button>`).join('');

    // Rulers, one inch is 96px
    function drawRuler(el) {
      const v = el.dataset.ruler === 'v';
      const start = +el.dataset.start;
      const size = v ? el.clientHeight : el.clientWidth;
      let s = '';
      for (let i = 0; start + i * 9.6 < size; i++) {
        const p = Math.round(start + i * 9.6) + 0.5;
        if (p < 0) continue;
        const len = i % 100 === 0 ? 16 : i % 10 === 0 ? 8 : i % 5 === 0 ? 5 : 3;
        s += v ? `<path d="M${18 - len} ${p}h${len}"/>` : `<path d="M${p} ${18 - len}v${len}"/>`;
        if (i % 10 === 0 && p + 10 < size) s += v
          ? `<text transform="translate(10 ${p + 6}) rotate(-90)">${i / 10}</text>`
          : `<text x="${p + 2}" y="12">${i / 10}</text>`;
      }
      if (el.dataset.mark) s += v ? `<path stroke="#00f" d="M1 ${el.dataset.mark}.5h17"/>` : `<path stroke="#00f" d="M${el.dataset.mark}.5 2v16"/>`;
      el.innerHTML = `<svg class="absolute inset-0 w-full h-full [&_text]:fill-black [&_text]:stroke-none [&_text]:text-[10px]" stroke="#111">${s}</svg>`;
    }
    const rulerObserver = new ResizeObserver(entries => entries.forEach(e => drawRuler(e.target)));
    document.querySelectorAll('[data-ruler]').forEach(el => rulerObserver.observe(el));

    // Blocks on the partition layout
    const pink = '#ee80a9,#bb4d78', teal = '#58b5b5,#3e8c8c', green = '#43bf7a,#2f975b';
    const blocks = [
      { x: 18, y: 50, w: 191, h: 131, fill: pink, tag: '03', text: 'Dante Audio<br>Streams', tx: 71, ty: 49, out: 4, labels: ['Audio Stream 1', 'Audio Stream 2', 'Audio Stream 3', 'Audio Stream 4'] },
      { x: 288, y: 50, w: 81, h: 71, fill: '#dba7ea,#7f589c', tag: '03', text: 'Level', tx: 47, ty: 27, in: 4, out: 4 },
      { x: 468, y: 50, w: 211, h: 141, fill: '#5aa630,#38731b', tag: '03', text: 'Source Selector<br>6 Channel', tx: 113, ty: 54, in: 6, out: 1 },
      { x: 318, y: 210, w: 94, h: 71, fill: teal, tag: '03', text: 'Peak Meter', tx: 54, ty: 27, in: 4 },
      { x: 798, y: 50, w: 67, h: 31, fill: '#a8ab42,#717125', tag: '01', text: 'Ducker', tx: 41, ty: 7, in: 2, out: 1, side: 'S' },
      { x: 958, y: 50, w: 131, h: 101, fill: pink, tag: '02', text: 'Lobby Speakers', tx: 73, ty: 42, in: 4 },
      { x: 918, y: 210, w: 92, h: 21, fill: teal, tag: '01', text: 'RMS Meter', tx: 54, ty: 2, in: 1 },
      { x: 368, y: 300, w: 151, h: 121, fill: green, tag: '01', text: 'Lobby<br>Mic RX', tx: 118, ty: 45, out: 2, mics: ['Front Desk Mic 1', 'Front Desk Mic 2'] },
      { x: 578, y: 300, w: 99, h: 35, fill: '#ee1020,#ac0a16', tag: '01', text: 'Matrix Mixer<br>2x1', tx: 57, ty: 2, in: 2, out: 1 },
      { x: 638, y: 420, w: 94, h: 31, fill: teal, tag: '01', text: 'Peak Meter', tx: 55, ty: 7, in: 2 },
    ];
    const pin = (x, y, flip) => `<path fill="url(#pin)" d="${flip ? `M${x} ${y - 4}h-4l-2 3v3l2 3h4z` : `M${x} ${y - 4}h4l2 3v3l-2 3h-4z`}"/>`;
    let pins = '<defs><linearGradient id="pin"><stop stop-color="#8a8a8a"/><stop offset="1" stop-color="#bcbcbc"/></linearGradient></defs>';
    blocks.forEach(b => {
      for (let i = 0; i < (b.in || 0); i++) pins += pin(b.x, b.y + 10 + i * 10, true);
      for (let i = 0; i < (b.out || 0); i++) pins += pin(b.x + b.w, b.y + 10 + i * 10);
    });
    pins += '<path fill="#b0b0b0" d="M804 50v-4l2-2h4l2 2v4zM804 81v4l2 2h4l2-2v-4z"/>';
    pins += '<path fill="none" stroke="#999" d="M358.500 307v5M360.500 307v5M358.500 317v5M360.500 317v5M363 306v8l5-4zM363 316v8l5-4z"/>';

    const wires = `
      <g stroke="#f4f4f4">
        <path d="M215 60.500h67M215 70.500h67M215 80.500h67M215 90.500h67M375 60.500h87M375 70.500h87M375 80.500h87M375 90.500h87"/>
        <path d="M871 60.500h10q7 0 7.500 9V210q0 10 9 10.500h15"/>
      </g>
      <g stroke="#40e0d0">
        <path d="M215 60.500h26q7 1 7.500 10V210q1 10 8 10.500h55"/>
        <path d="M215 70.500h16q7 1 7.500 10V220q1 10 8 10.500h65"/>
        <path d="M215 80.500h6q7 1 7.500 10V230q1 10 8 10.500h75"/>
        <path d="M215 90.500h3.500V240q1 10 8 10.500h85"/>
      </g>
      <path stroke="#1e90ff" d="M525 310.500h47M525 320.500h47M683 310.500h49q6-1 6.500-8V80q1-9 9-9.500h44"/>
      <g stroke="#40e0d0">
        <path d="M525 310.500h15q8 1 8.500 10V420q1 10 9 10.500h75"/>
        <path d="M525 320.500h6q7 1 7.500 10V430q1 10 9 10.500h85"/>
      </g>
      <path stroke="#0000f0" stroke-width="2" stroke-dasharray="2 2" d="M685 60h107M872 60h80"/>`;

    const blockHtml = b => `
      <div class="absolute rounded-[3px] inset-ring inset-ring-black/10 text-white/95" style="left:${b.x}px;top:${b.y}px;width:${b.w}px;height:${b.h}px;background:linear-gradient(${b.fill})">
        <span class="absolute left-px top-[2px] w-[15px] h-[13px] border border-black text-black text-[11px] leading-[11px] text-center">${b.tag}</span>
        <p class="absolute -translate-x-1/2 text-center whitespace-nowrap leading-[15px]" style="left:${b.tx}px;top:${b.ty}px">${b.text}</p>
        ${b.labels ? `<div class="absolute right-px top-[5px] text-[9px] leading-[10px] text-right whitespace-nowrap">${b.labels.join('<br>')}</div>` : ''}
        ${b.mics ? `<div class="absolute left-[2px] top-[5px] text-[9px] leading-[10px] whitespace-nowrap"><span class="pl-[14px]">${b.mics[0]}</span><br>${b.mics[1]}</div>` : ''}
        ${b.side ? `<span class="absolute left-[3px] top-[14px] text-[11px] leading-[12px]">${b.side}</span>` : ''}
      </div>`;

    // Level meters
    const scale = [['+36', 9], ['+24', 20], ['+12', 34], ['0', 46], ['-10', 56], ['-21', 67], ['-32', 78], ['-42', 89], ['-53', 100], ['-64', 110]];
    const meters = [
      { x: 78, y: 290, names: ['A Str 1', 'A Str 2', 'A Str 3', 'A Str 4'] },
      { x: 748, y: 350, names: ['FD Mic1', 'FD Mic2'] },
      { x: 1038, y: 180, names: ['Lobby'] },
    ];
    const grip = '<div class="h-2 bg-[repeating-linear-gradient(135deg,#8c8c8c_0_1px,#a0a0a0_1px_2px,#969696_2px_3px)]"></div>';
    const meterHtml = m => `
      <div class="absolute bg-[#2d2d2d] font-['DejaVu_Sans_Condensed','DejaVu_Sans',sans-serif] text-[#868686]" style="left:${m.x}px;top:${m.y}px">
        ${grip}
        <div class="flex">${m.names.map(n => `
          <div class="w-[49px] h-[156px]">
            <div class="relative h-[117px] flex justify-end pr-1 pt-2">
              ${scale.map(([t, y]) => `<span class="absolute right-[23px] text-[10px] leading-[12px]" style="top:${y - 6}px">${t}</span>`).join('')}
              <div class="w-[14px] h-[104px] rounded-full border-2 border-[#151515] bg-[linear-gradient(90deg,#0008,#0000_40%,#0000_60%,#0008),linear-gradient(#700000_0_11px,#4a4500_11px_36px,#004500_36px)]"></div>
            </div>
            <div class="ml-[7px] w-[34px] h-[13px] bg-black text-white text-[10px] leading-[12px] text-center">-100.0</div>
            <div class="mt-[9px] text-[11px] leading-[14px] text-center pr-px whitespace-nowrap">${n}</div>
          </div>`).join('')}</div>
        ${grip}
      </div>`;

    document.getElementById('canvas').innerHTML = `
      <div class="absolute left-0 right-0 top-[10px] h-px bg-[repeating-linear-gradient(90deg,#90ee90_0_4px,transparent_4px_6px)]"></div>
      <svg class="absolute inset-0 w-full h-full" fill="none">${wires}${pins}</svg>
      <div class="font-['Liberation_Sans',Arial,sans-serif] text-[13px]">${blocks.map(blockHtml).join('')}</div>
      ${meters.map(meterHtml).join('')}`;

    document.getElementById('systemCanvas').innerHTML = `
      <div class="absolute left-0 right-0 top-[10px] h-px bg-[repeating-linear-gradient(90deg,#90ee90_0_4px,transparent_4px_6px)]"></div>
      <div class="absolute top-0 bottom-0 left-[10px] w-px bg-[repeating-linear-gradient(#90ee90_0_4px,transparent_4px_6px)]"></div>
      <div class="absolute left-10 top-[70px] w-[300px] h-[211px] rounded-[3px] inset-ring inset-ring-[#868686] bg-[#696969] font-['Liberation_Sans',Arial,sans-serif] text-[13px] text-white">
        <div class="flex items-center gap-[3px] pl-px pt-px"><span class="border border-white px-px leading-[15px]">P01</span>Front Desk</div>
        <div class="absolute left-[50px] top-[30px] w-[200px] h-[121px] rounded-[3px] bg-linear-to-b from-[#43bf7a] to-[#2f975b]">
          <div class="absolute left-[84px] top-1 text-[9px] leading-[10px]">Front Desk TX 1<br>Front Desk TX 2</div>
          <p class="absolute left-2 top-[46px] text-[11px] leading-[13px] text-center">Front Desk TX<br>Audio</p>
        </div>
      </div>`;
  </script>
</body>
</html>
